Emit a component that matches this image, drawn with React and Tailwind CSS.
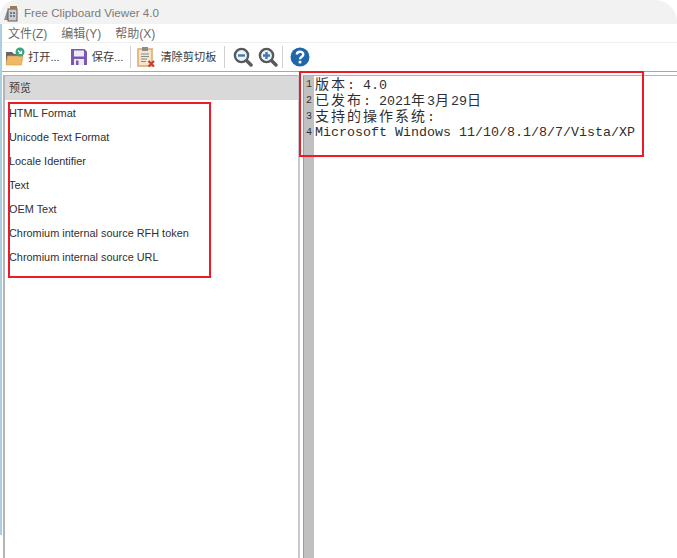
import React from 'react';

const SANS = 'font-["Liberation_Sans","Noto_Sans_CJK_SC",sans-serif]';

const formats = [
  'HTML Format',
  'Unicode Text Format',
  'Locale Identifier',
  'Text',
  'OEM Text',
  'Chromium internal source RFH token',
  'Chromium internal source URL',
];

// each CJK char takes two cells of the mono font, so it gets its own span
const Cjk = ({ children }) => <span className="text-[14px] tracking-[2px]">{children}</span>;

const lines = [
  <><Cjk>版本</Cjk>: 4.0</>,
  <><Cjk>已发布</Cjk>: 2021<Cjk>年</Cjk>3<Cjk>月</Cjk>29<Cjk>日</Cjk></>,
  <><Cjk>支持的操作系统</Cjk>:</>,
  <>Microsoft Windows 11/10/8.1/8/7/Vista/XP</>,
];

const AppIcon = () => (
  <svg width="16" height="18" viewBox="0 0 16 18">
    <path d="M1 16 L4 7 H6 V16 Z" fill="#8a8f96" />
    <rect x="5" y="5" width="9" height="12" fill="#c9ccd0" stroke="#6b5a4a" />
    <rect x="7" y="2" width="7" height="3" fill="#9a7b56" />
    <path d="M7 8h2v2H7zM10 8h2v2h-2zM7 11h2v2H7zM10 11h2v2h-2z" fill="#6d7f95" />
  </svg>
);

const OpenIcon = () => (
  <svg width="20" height="20" viewBox="0 0 20 20">
    <path d="M1 5 H7 L9 7 H14 V16 H1 Z" fill="#666" />
    <path d="M1 18 L2.500 9 H18 L16.500 18 Z" fill="#efb866" stroke="#d9a253" strokeWidth="0.7" />
    <circle cx="15" cy="5" r="4.500" fill="#3aa57c" />
    <path d="M13 3.500 L16.500 6.500 M16.500 3.800 V6.500 H13.800" stroke="#fff" strokeWidth="1.200" fill="none" />
  </svg>
);

const SaveIcon = () => (
  <svg width="18" height="18" viewBox="0 0 18 18">
    <path d="M1 1 H14.500 L17 3.500 V17 H1 Z" fill="#7c58b4" />
    <rect x="4" y="2.500" width="10" height="6" fill="#eceaf2" />
    <rect x="4" y="11" width="10" height="6" fill="#eceaf2" />
    <rect x="6" y="12.500" width="2.500" height="4.500" fill="#7c58b4" />
  </svg>
);

const ClearIcon = () => (
  <svg width="20" height="22" viewBox="0 0 20 22">
    <rect x="2" y="3" width="14" height="17" fill="#f3e6d0" stroke="#e0ad69" strokeWidth="1.600" />
    <rect x="6" y="1" width="6" height="4" fill="#8d8d8d" />
    <path d="M5 8h8M5 10.500h8M5 13h6M5 15.500h5" stroke="#8a8a8a" strokeWidth="1" />
    <path d="M12.500 15 L18 20.500 M18 15 L12.500 20.500" stroke="#d33b2c" strokeWidth="2.200" />
  </svg>
);

const ZoomIcon = ({ plus }) => (
  <svg width="20" height="20" viewBox="0 0 20 20">
    <path d="M13 13 L18 18" stroke="#555a5e" strokeWidth="3.400" strokeLinecap="round" />
    <circle cx="8.500" cy="8.500" r="6.600" fill="#f1f4f7" stroke="#555a5e" strokeWidth="2.400" />
    <path d={plus ? 'M5 8.500h7M8.500 5v7' : 'M5 8.500h7'} stroke="#3f79ad" strokeWidth="2.400" />
  </svg>
);

const HelpIcon = () => (
  <svg width="20" height="20" viewBox="0 0 20 20">
    <circle cx="10" cy="10" r="9.500" fill="#1f66aa" />
    <path d="M6.800 7.500 C7 3.800 13.300 3.800 13.300 7.400 C13.300 9.800 10 9.800 10 12.300" stroke="#fff" strokeWidth="2.400" fill="none" />
    <rect x="8.700" y="13.800" width="2.600" height="2.600" fill="#fff" />
  </svg>
);

const Divider = () => <div className="w-px h-[22px] bg-[#d0d0d0]" />;

export default function App() {
  return (
    <div className={`${SANS} relative w-[677px] h-[558px] overflow-hidden bg-white flex flex-col text-[10.9px] text-[#3a3a3a]`}>
      {/* title bar */}
      <div className="h-6 shrink-0 bg-[#f2f2f2] rounded-tr-[22px] rounded-tl-[16px] flex items-center gap-[5px] pl-[3px] pt-[2px] text-[11.65px] text-[#7a7a7a]">
        <AppIcon />
        <span>Free Clipboard Viewer 4.0</span>
      </div>

      <div className="flex-1 min-h-0 flex">
        {/* window edge */}
        <div className="w-[2px] shrink-0 mb-[23px] bg-[#a9cfe0]" />

        <div className="flex-1 min-w-0 flex flex-col">
          {/* menu */}
          <div className="h-[19px] shrink-0 flex items-center gap-[14px] pl-[6px] pt-px text-[12px] text-[#6b6b6b] border-b border-[#f0f0f0]">
            <span>文件(Z)</span>
            <span>编辑(Y)</span>
            <span>帮助(X)</span>
          </div>

          {/* toolbar */}
          <div className="h-[29px] shrink-0 flex items-center pl-[3px] text-[11.2px] border-b border-[#a8a8a8]">
            <OpenIcon />
            <span className="ml-[3px]">打开...</span>
            <span className="ml-[10px]"><SaveIcon /></span>
            <span className="ml-[4px]">保存...</span>
            <span className="ml-[7px]"><Divider /></span>
            <span className="ml-[5px]"><ClearIcon /></span>
            <span className="ml-[4px]">清除剪切板</span>
            <span className="ml-[8px]"><Divider /></span>
            <span className="ml-[8px]"><ZoomIcon /></span>
            <span className="ml-[5px]"><ZoomIcon plus /></span>
            <span className="ml-[4px]"><Divider /></span>
            <span className="ml-[7px]"><HelpIcon /></span>
          </div>

          {/* panes */}
          <div className="flex-1 flex min-h-0 pt-[3px]">
            <div className="w-[298px] shrink-0 pl-px border-r-2 border-[#c8c8d4]">
              <div className="h-full border-l-2 border-t border-[#b4b4b4] flex flex-col">
                <div className="h-6 shrink-0 bg-[#d9d9d9] flex items-center pl-[4px]">预览</div>
                <div className="ml-[3px] w-[203px] h-[176px] mt-[2px] border-2 border-[#ed1c24]">
                  <div className="-mt-[3px]">
                    {formats.map((f) => (
                      <div key={f} className="h-6 flex items-center -ml-px text-[#2f2f2f]">{f}</div>
                    ))}
                  </div>
                </div>
              </div>
            </div>

            <div className="ml-[3px] flex-1 flex border-t border-[#b4b4b4]">
              <div className="w-[11px] shrink-0 bg-[#c0c0c0] border-l border-[#9c9c9c] font-['Liberation_Mono',monospace] text-[10px] text-[#333]">
                {lines.map((_, i) => (
                  <div key={i} className="h-4 flex items-center justify-center">{i + 1}</div>
                ))}
              </div>
              <div className="flex-1 font-['Liberation_Mono','Noto_Sans_CJK_SC',monospace] text-[13.33px] text-[#2f2f2f] pl-px pt-px">
                {lines.map((l, i) => (
                  <div key={i} className="h-4 leading-4 whitespace-pre">{l}</div>
                ))}
              </div>
            </div>
          </div>
        </div>
      </div>

      {/* red annotation over the editor */}
      <div className="absolute left-[299px] top-[71px] w-[345px] h-[86px] border-2 border-[#ed1c24] pointer-events-none" />
    </div>
  );
}
